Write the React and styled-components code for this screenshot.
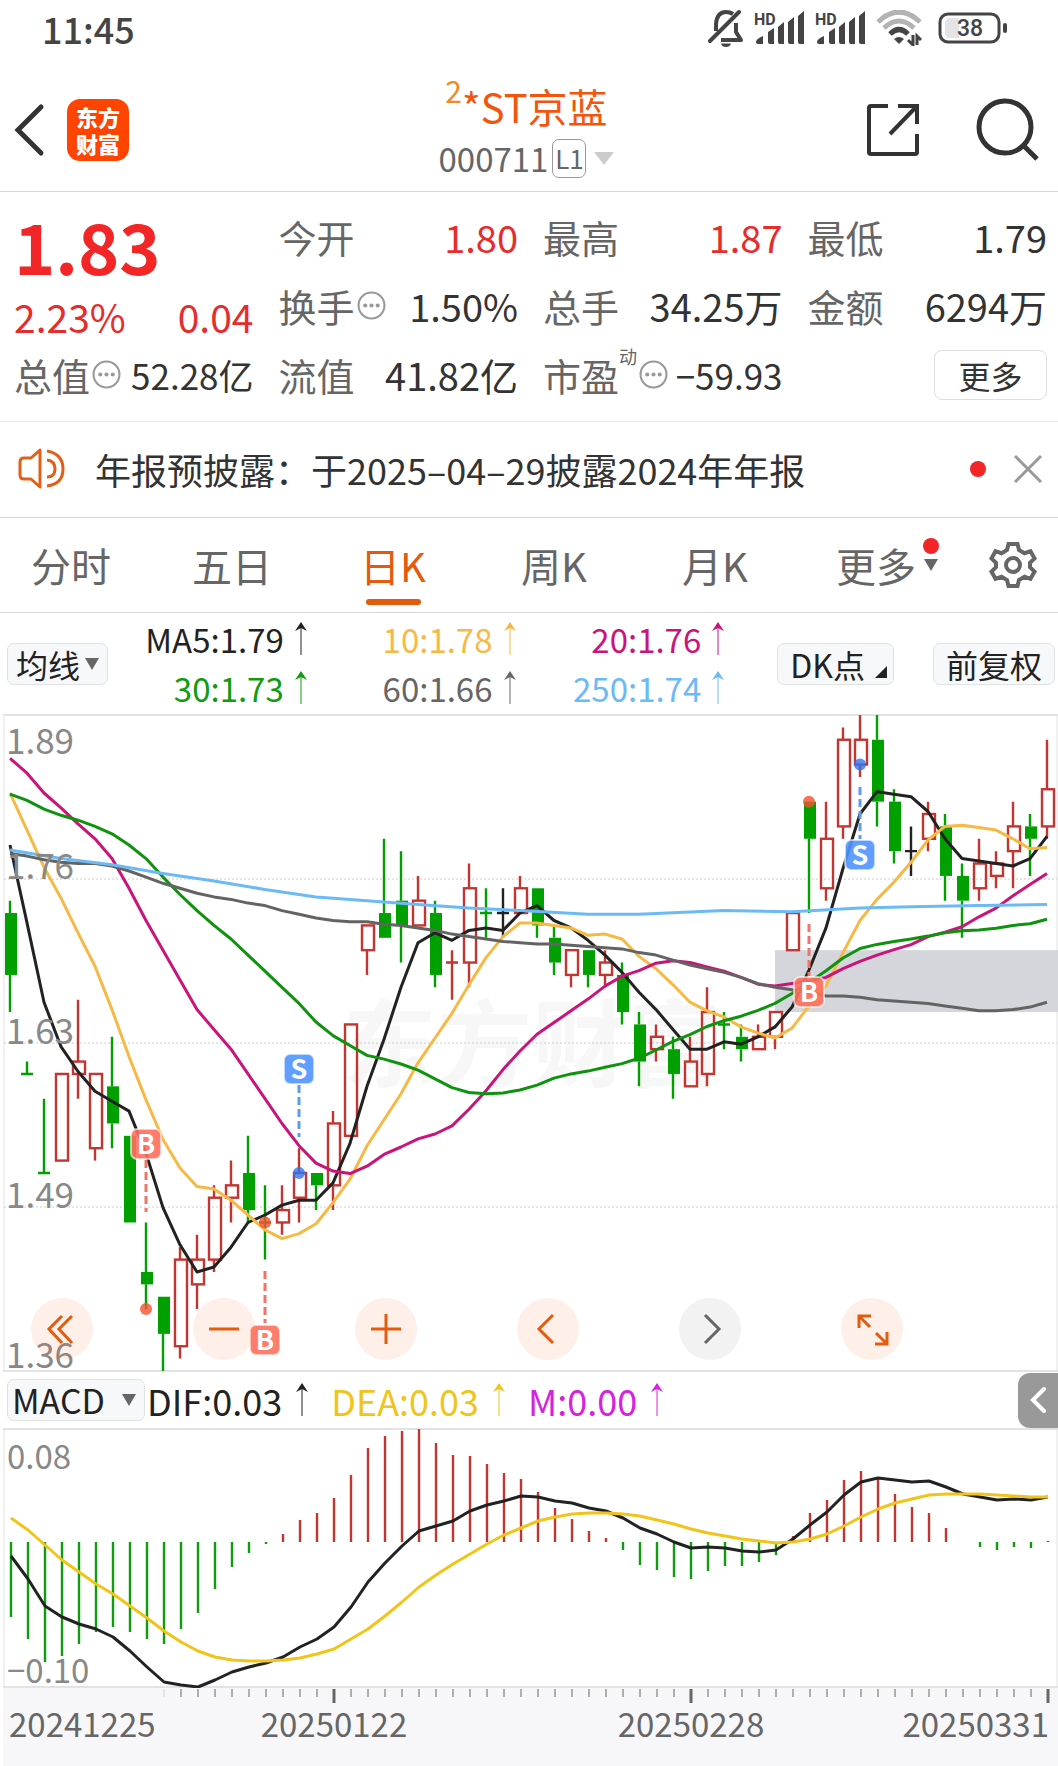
import React, { useState } from "react";
import styled, { createGlobalStyle } from "styled-components";

//Daily candles as [open, high, low, close], all in cents.
const candles = [
  [173, 174, 165, 168], [160, 161, 160, 160], [152, 158, 152, 152], [153, 160, 153, 160],
  [160, 166, 158, 161], [154, 160, 153, 160], [159, 163, 154, 156], [155, 155, 148, 148],
  [144, 148, 141, 143], [142, 142, 136, 139], [138, 146, 137, 145], [143, 147, 141, 145],
  [145, 151, 144, 150], [150, 153, 148, 151], [152, 155, 148, 149], [148, 151, 145, 148],
  [148, 151, 147, 149], [150, 154, 148, 152], [152, 152, 149, 151], [151, 157, 149, 156],
  [155, 164, 155, 164], [170, 172, 168, 172], [173, 179, 171, 171], [174, 178, 169, 172],
  [172, 176, 172, 174], [173, 174, 167, 168], [169, 170, 166, 169], [169, 177, 167, 175],
  [173, 175, 171, 173], [173, 175, 171, 173], [173, 176, 173, 175], [175, 175, 171, 172],
  [171, 172, 168, 169], [168, 170, 167, 170], [170, 170, 167, 168], [168, 170, 167, 169],
  [168, 169, 164, 165], [164, 165, 159, 161], [162, 164, 161, 163], [162, 163, 158, 160],
  [159, 163, 159, 161], [160, 167, 159, 165], [164, 165, 162, 164], [163, 164, 161, 162],
  [162, 164, 162, 163], [163, 165, 162, 165], [170, 173, 170, 173], [182, 182, 173, 179],
  [175, 182, 174, 179], [180, 188, 179, 187], [185, 189, 184, 187], [187, 189, 180, 182],
  [182, 183, 177, 178], [178, 180, 176, 178], [179, 182, 178, 181], [180, 181, 174, 176],
  [176, 177, 171, 174], [175, 179, 174, 177], [176, 178, 175, 177], [178, 182, 175, 180],
  [180, 181, 176, 179], [180, 187, 179, 183],
];

//Averages that reach back before the first candle start from these values.
const ma5Head = [178.5, 172.2, 165.8, 162.2];
const ma10Head = [182.7, 179.7, 176.7, 174.2, 171.4, 168.7, 165.2, 161.4, 157.9];
const ma20Head = [
  185.5, 184.3, 182.7, 181.5, 180.2, 179, 177.4, 175, 172.4, 170, 167.6, 165.2, 163.6, 162,
  160, 158, 156, 154.2, 152.8,
];
const ma30Head = [
  182.6, 182.1, 181.4, 180.9, 180.5, 180, 179.4, 178.5, 177.4, 175.9, 174.5, 173.2, 172,
  170.9, 169.6, 168.3, 167, 165.7, 164.2, 163.1, 162.3, 161.5, 161.2, 160.8, 160.3, 159.6,
  158.9, 158.5, 158.4,
];
const ma60 = [
  177.8, 177.6, 177.3, 177.1, 177, 177, 176.8, 176.4, 175.9, 175.4, 175, 174.6, 174.3, 174.1,
  173.8, 173.6, 173.2, 172.9, 172.6, 172.4, 172.3, 172.3, 172.1, 172, 171.8, 171.6, 171.3,
  171.1, 170.9, 170.7, 170.6, 170.5, 170.5, 170.4, 170.3, 170.2, 170.1, 169.8, 169.6, 169.2,
  168.8, 168.5, 168.2, 167.8, 167.3, 167, 166.8, 166.6, 166.3, 166.3, 166.2, 166, 165.9,
  165.8, 165.7, 165.5, 165.3, 165.1, 165.1, 165.2, 165.4, 165.8,
];
const ma250 = [
  [0, 178.1], [3, 177.4], [6, 176.9], [9, 176.2], [12, 175.6], [15, 174.9], [18, 174.3],
  [21, 174], [24, 173.7], [27, 173.4], [30, 173.2], [34, 172.9], [37, 172.9], [42, 173.2],
  [46, 173.1], [50, 173.4], [53, 173.5], [57, 173.6], [61, 173.7],
];

//MACD series, in chart units above or below the zero line.
const bars = [
  -75, -97, -120, -114, -102, -90, -85, -90, -97, -102, -87, -71, -47, -25, -11, -2, 8, 22, 29,
  44, 67, 94, 106, 111, 113, 99, 87, 86, 78, 69, 63, 50, 34, 23, 11, 4, -8, -23, -28, -35, -37,
  -29, -24, -24, -20, -13, 6, 29, 42, 62, 71, 64, 48, 35, 29, 14, 0, -5, -8, -5, -6, 1,
];
const dif = [
  -14, -37, -64, -75, -82, -87, -95, -109, -125, -140, -143, -145, -138, -130, -125, -121,
  -115, -105, -97, -85, -65, -40, -21, -4, 11, 16, 21, 31, 37, 41, 46, 45, 41, 39, 34, 31, 24,
  14, 8, 0, -6, -5, -6, -9, -10, -8, 3, 17, 30, 47, 60, 64, 62, 60, 61, 55, 48, 45, 42, 43, 42,
  45,
];
const dea = [
  24, 12, -3, -18, -30, -42, -52, -64, -76, -89, -100, -109, -115, -118, -119, -119, -118,
  -116, -112, -107, -97, -87, -74, -60, -45, -33, -22, -12, -2, 7, 14, 21, 25, 28, 29, 29, 28,
  26, 22, 18, 13, 9, 6, 3, 1, -1, 0, 3, 8, 16, 25, 33, 39, 43, 47, 48, 48, 48, 47, 46, 45, 45,
];

//Buy and sell points. dot is a price, from / to are where the dashed line runs, badge is the letter.
const marks = [
  { i: 8, type: "B", dot: 141, from: 446, to: 498, badge: 430 },
  { i: 15, type: "B", dot: 148, from: 557, to: 609, badge: 626 },
  { i: 17, type: "S", dot: 152, from: 371, to: 423, badge: 355 },
  { i: 47, type: "B", dot: 182, from: 210, to: 262, badge: 278 },
  { i: 50, type: "S", dot: 185, from: 73, to: 125, badge: 141 },
];

const RED = "#c23531";
const GREEN = "#00a000";
const TOP = 189;
const STEP = 656 / 53;

const candleX = (i) => 10 + i * 17;
const priceY = (p) => 1 + (TOP - p) * STEP;

const average = (head, days) =>
  candles.map((_, i) => {
    if (i < days - 1) return head[i];
    const part = candles.slice(i - days + 1, i + 1);
    return part.reduce((sum, c) => sum + c[3], 0) / days;
  });

const toPoints = (values) => values.map((v, i) => `${candleX(i)},${priceY(v).toFixed(1)}`).join(" ");
const macdPoints = (values) => values.map((v, i) => `${11 + i * 17},${114 - v}`).join(" ");

const Candle = ({ i, data }) => {
  const [open, high, low, close] = data;
  const x = candleX(i);
  const prev = i ? candles[i - 1][3] : open + 1;
  let color = close > open ? RED : GREEN;
  if (open === close) {
    color = close > prev ? RED : close < prev ? GREEN : "#222222";
    return (
      <g stroke={color} strokeWidth="2.4">
        <path d={`M${x} ${priceY(high)}V${priceY(low)}M${x - 6} ${priceY(close)}h12`} />
      </g>
    );
  }
  const top = priceY(Math.max(open, close));
  const bottom = priceY(Math.min(open, close));
  return (
    <g stroke={color} strokeWidth="2.4">
      <path d={`M${x} ${priceY(high)}V${top}M${x} ${bottom}V${priceY(low)}`} />
      {close > open ? (
        <rect x={x - 5} y={top} width="12" height={bottom - top} fill="none" />
      ) : (
        <rect x={x - 5} y={top} width="12" height={bottom - top} fill={color} stroke="none" />
      )}
    </g>
  );
};

const Mark = ({ mark }) => {
  const x = candleX(mark.i);
  const buy = mark.type === "B";
  const color = buy ? "#ff6f5c" : "#4f94ff";
  return (
    <g>
      <circle cx={x} cy={priceY(mark.dot)} r="6" fill={buy ? "#f8502f" : "#2f74f0"} opacity="0.8" />
      <path
        d={`M${x} ${mark.from}V${mark.to}`}
        stroke={buy ? "#ee7468" : "#5e9cea"}
        strokeWidth="3"
        strokeDasharray="8 4"
      />
      <rect
        x={x - 15}
        y={mark.badge - 15}
        width="30"
        height="30"
        rx="6"
        fill={color}
        stroke="#ffffff"
        strokeOpacity="0.6"
        strokeWidth="2"
        fillOpacity="0.9"
      />
      <BadgeText x={x} y={mark.badge + 10}>
        {mark.type}
      </BadgeText>
    </g>
  );
};

const PriceChart = () => (
  <Chart viewBox="0 0 1058 658" role="img" aria-label="日K线">
    <Watermark x="342" y="366">东方财富</Watermark>
    <path d="M3 1H1058M3 657H1058" stroke="#e3e3e3" strokeWidth="2" />
    <path d="M4 1V657M1057 1V657" stroke="#e3e3e3" />
    <path d="M4 165H1057M4 329H1057M4 493H1057" stroke="#cccccc" strokeDasharray="2 2" />
    <rect x="775" y={priceY(170)} width="283" height={5 * STEP} fill="#d4d6db" />
    {candles.map((c, i) => (
      <Candle key={i} i={i} data={c} />
    ))}
    <Line points={toPoints(average(ma5Head, 5))} stroke="#222222" />
    <Line points={toPoints(average(ma10Head, 10))} stroke="#f7b945" />
    <Line points={toPoints(average(ma20Head, 20))} stroke="#c9147c" />
    <Line points={toPoints(average(ma30Head, 30))} stroke="#0f930f" />
    <Line points={toPoints(ma60)} stroke="#636363" />
    <Line
      points={ma250.map(([i, v]) => `${candleX(i)},${priceY(v).toFixed(1)}`).join(" ")}
      stroke="#6cbaf5"
    />
    {marks.map((m) => (
      <Mark key={m.i} mark={m} />
    ))}
    <Scale x="6" y="40">1.89</Scale>
    <Scale x="6" y="165">1.76</Scale>
    <Scale x="6" y="330">1.63</Scale>
    <Scale x="6" y="494">1.49</Scale>
    <Scale x="6" y="654">1.36</Scale>
  </Chart>
);

const MacdChart = () => (
  <Chart viewBox="0 0 1058 260" role="img" aria-label="MACD">
    <path d="M3 1H1058M3 259H1058" stroke="#e3e3e3" strokeWidth="2" />
    <path d="M4 1V259M1057 1V259" stroke="#e3e3e3" />
    {bars.map((v, i) => (
      <path
        key={i}
        d={`M${11 + i * 17} 114v${-v}`}
        stroke={v > 0 ? RED : "#0f9c0f"}
        strokeWidth="2.4"
      />
    ))}
    <Line points={macdPoints(dif)} stroke="#222222" />
    <Line points={macdPoints(dea)} stroke="#f0c419" />
    <Scale $small x="7" y="41">0.08</Scale>
    <Scale $small x="7" y="255">−0.10</Scale>
  </Chart>
);

const DateAxis = () => (
  <Chart viewBox="0 0 1058 78" role="img" aria-label="日期">
    <rect x="3" width="1055" height="78" fill="#f7f7f9" />
    {bars.map((_, i) => {
      if (i < 9) return null;
      const major = i === 19 || i === 40 || i === 61;
      return (
        <path
          key={i}
          d={`M${11 + i * 17} 1v${major ? 14 : 8}`}
          stroke={i === 9 ? "#d0d0d0" : "#666666"}
          strokeWidth={major ? 3 : 1}
        />
      );
    })}
    <DateText x="9" y="49">20241225</DateText>
    <DateText x="334" y="49" textAnchor="middle">20250122</DateText>
    <DateText x="691" y="49" textAnchor="middle">20250228</DateText>
    <DateText x="1049" y="49" textAnchor="end">20250331</DateText>
  </Chart>
);

const UpArrow = () => (
  <svg width="14" height="34" viewBox="0 0 14 34" aria-hidden="true">
    <path d="M7 1V33" stroke="currentColor" strokeWidth="1" fill="none" />
    <path d="M7 0l6 9-6-3-6 3z" fill="currentColor" />
  </svg>
);

const Caret = ({ color = "#666666", width = 14, height = 12 }) => (
  <svg width={width} height={height} viewBox="0 0 14 12" preserveAspectRatio="none" aria-hidden="true">
    <path d="M0 0H14L7 12z" fill={color} />
  </svg>
);

const Signal = () => (
  <svg width="51" height="36" viewBox="0 0 51 36" aria-hidden="true">
    <HdText x="0" y="15">HD</HdText>
    <path
      d="M2 32q0-3 7-6v8H4q-2 0-2-2zM14 22l6-4v16h-4q-2 0-2-2zM24 17l6-5v22h-4q-2 0-2-2zM34 12l6-5v27h-4q-2 0-2-2zM44 6l6-5v33h-4q-2 0-2-2z"
      fill="#444444"
    />
  </svg>
);

const StatusIcons = () => (
  <Status>
    <svg width="36" height="38" viewBox="0 0 36 38" fill="none" stroke="#444444" strokeWidth="4">
      <path d="M31 3L2 32" strokeLinecap="round" />
      <path d="M8 22V15Q9 3 18 3q4 0 7 2M28 14v9l5 8H13" strokeLinejoin="round" />
      <path d="M13 34.500h10q-1 3.500-5 3.500t-5-3.500z" fill="#444444" stroke="none" />
    </svg>
    <Signal />
    <Signal />
    <svg width="52" height="36" viewBox="0 0 52 36" fill="none">
      <path d="M2 12Q23-8 44 12" stroke="#b3b3b3" strokeWidth="5" />
      <path d="M8 18Q23 4 38 18" stroke="#b3b3b3" strokeWidth="5" />
      <path d="M14 24Q23 15 32 24" stroke="#444444" strokeWidth="5" />
      <path d="M18 29q5-4 10 0l-5 5z" fill="#444444" />
      <path d="M37 25v10l-5-5M41 35V26l4 4" stroke="#444444" strokeWidth="3" />
    </svg>
    <svg width="70" height="32" viewBox="0 0 70 32">
      <rect x="2" y="2" width="59" height="28" rx="8" fill="#ffffff" stroke="#444444" strokeWidth="3" />
      <path d="M12 6h9v20h-9q-5 0-5-5V11q0-5 5-5z" fill="#e4e4e4" />
      <rect x="65" y="11" width="4" height="10" rx="2" fill="#444444" />
      <BatteryText x="32" y="24">38</BatteryText>
    </svg>
  </Status>
);

const Dots = () => (
  <DotsIcon width="29" height="29" viewBox="0 0 28 28" aria-hidden="true">
    <circle cx="14" cy="14" r="12.500" fill="none" stroke="#999999" strokeWidth="2" />
    <g fill="#999999">
      <circle cx="8" cy="14" r="2" />
      <circle cx="14" cy="14" r="2" />
      <circle cx="20" cy="14" r="2" />
    </g>
  </DotsIcon>
);

const quotes = [
  { label: "今开", value: "1.80", red: true },
  { label: "最高", value: "1.87", red: true },
  { label: "最低", value: "1.79" },
  { label: "换手", value: "1.50%", info: true },
  { label: "总手", value: "34.25万" },
  { label: "金额", value: "6294万" },
  { label: "总值", value: "52.28亿", info: true, small: true },
  { label: "流值", value: "41.82亿" },
  { label: "市盈", value: "−59.93", info: true, small: true, sup: "动" },
];

const averages = [
  { text: "MA5:1.79", color: "#222222" },
  { text: "10:1.78", color: "#f7b945" },
  { text: "20:1.76", color: "#c9147c" },
  { text: "30:1.73", color: "#0f9c0f" },
  { text: "60:1.66", color: "#666666" },
  { text: "250:1.74", color: "#6cbaf5" },
];

const tabs = ["分时", "五日", "日K", "周K", "月K", "更多"];

const controls = [
  { name: "最早", d: "M31 18L18 31l13 14M41 18L28 31l13 14" },
  { name: "缩小", d: "M16 31h30" },
  { name: "放大", d: "M16 31h30M31 16v30" },
  { name: "向左", d: "M36 17L22 31l14 14" },
  { name: "向右", d: "M26 17l14 14-14 14", muted: true },
  { name: "全屏", d: "M30 18H18v12M18 18l11 11M34 46h12V34M46 46L35 35" },
];

const App = () => {
  const [tab, setTab] = useState("日K");

  return (
    <Page>
      <GlobalStyle />
      <StatusBar>
        <Clock>11:45</Clock>
        <StatusIcons />
      </StatusBar>

      <Header>
        <HeaderSide>
          <IconButton aria-label="返回">
            <svg width="32" height="54" viewBox="0 0 32 54" fill="none" stroke="#333333" strokeWidth="5">
              <path d="M28 4L5 27l23 23" strokeLinecap="round" />
            </svg>
          </IconButton>
          <Logo href="#">
            东方
            <br />
            财富
          </Logo>
        </HeaderSide>
        <Stock>
          <StockName>
            <Rank>2</Rank>*ST京蓝
          </StockName>
          <StockCode>
            000711<Level>L1</Level>
            <Caret color="#cccccc" width={20} height={13} />
          </StockCode>
        </Stock>
        <HeaderSide $end>
          <IconButton aria-label="分享">
            <svg width="54" height="54" viewBox="0 0 54 54" fill="none" stroke="#333333" strokeWidth="4">
              <path d="M22 3H5Q3 3 3 5v44q0 2 2 2h44q2 0 2-2V31" />
              <path d="M32 3h19v18M51 3L24 31" />
            </svg>
          </IconButton>
          <IconButton aria-label="搜索">
            <svg width="64" height="64" viewBox="0 0 64 64" fill="none" stroke="#333333" strokeWidth="5">
              <circle cx="29" cy="29" r="26" />
              <path d="M47 47l14 14" />
            </svg>
          </IconButton>
        </HeaderSide>
      </Header>

      <Quote>
        <Price>
          <Last>1.83</Last>
          <Change>
            <span>2.23%</span>
            <span>0.04</span>
          </Change>
        </Price>
        {quotes.map((q) => (
          <Item key={q.label}>
            <Label>{q.label}</Label>
            {q.sup && <Sup>{q.sup}</Sup>}
            {q.info && <Dots />}
            <Value $red={q.red} $small={q.small}>
              {q.value}
            </Value>
          </Item>
        ))}
        <MoreButton>更多</MoreButton>
      </Quote>

      <Notice>
        <svg width="48" height="42" viewBox="0 0 48 42" fill="none" stroke="#e06019" strokeWidth="3">
          <path d="M22 2v37l-9-8H6q-4 0-4-4V14q0-4 4-4h7z" strokeLinejoin="round" />
          <path d="M29 12q8 1 8 9t-8 8M29 3q16 3 16 18T29 38" />
        </svg>
        <NoticeText href="#">年报预披露：于2025–04–29披露2024年年报</NoticeText>
        <RedDot />
        <IconButton aria-label="关闭">
          <svg width="28" height="28" viewBox="0 0 28 28" stroke="#999999" strokeWidth="3">
            <path d="M1 1l26 26M27 1L1 27" />
          </svg>
        </IconButton>
      </Notice>

      <TabBar>
        <Tabs>
          {tabs.map((t) => (
            <Tab key={t} $active={t === tab} onClick={() => setTab(t)}>
              {t}
              {t === "更多" && (
                <TabBadge>
                  <RedDot />
                  <Caret />
                </TabBadge>
              )}
            </Tab>
          ))}
        </Tabs>
        <IconButton aria-label="设置">
          <svg width="48" height="48" viewBox="0 0 48 48" fill="none" stroke="#666666" strokeWidth="4">
            <path d="M19.500 3h9l1.500 6 5.500 3.200 6-2 4 7.200-4.500 4.400v4.400l4.500 4.400-4 7.200-6-2-5.500 3.200-1.500 6h-9l-1.500-6-5.500-3.200-6 2-4-7.200L7 26.200v-4.400l-4.500-4.400 4-7.200 6 2L18 9z" />
            <circle cx="24" cy="24" r="7" />
          </svg>
        </IconButton>
      </TabBar>

      <AverageBar>
        <Chip>
          均线
          <Caret />
        </Chip>
        <Averages>
          {averages.map((a) => (
            <Reading key={a.text} $color={a.color}>
              {a.text}
              <UpArrow />
            </Reading>
          ))}
        </Averages>
        <ChipGroup>
          <Chip $wide>
            DK点
            <Corner width="12" height="12" viewBox="0 0 12 12">
              <path d="M12 0V12H0z" fill="#222222" />
            </Corner>
          </Chip>
          <Chip $wide>前复权</Chip>
        </ChipGroup>
      </AverageBar>

      <ChartArea>
        <PriceChart />
        <Controls>
          {controls.map((c) => (
            <RoundButton key={c.name} aria-label={c.name} $muted={c.muted}>
              <svg width="62" height="62" viewBox="0 0 62 62" fill="none" stroke="currentColor" strokeWidth="3">
                <path d={c.d} />
              </svg>
            </RoundButton>
          ))}
        </Controls>
      </ChartArea>

      <MacdBar>
        <Chip $macd>
          MACD
          <Caret />
        </Chip>
        <Reading $large $color="#222222">
          DIF:0.03
          <UpArrow />
        </Reading>
        <Reading $large $color="#f0c419">
          DEA:0.03
          <UpArrow />
        </Reading>
        <Reading $large $color="#d622dc">
          M:0.00
          <UpArrow />
        </Reading>
        <Drawer aria-label="展开">
          <svg width="16" height="28" viewBox="0 0 16 28" fill="none" stroke="#ffffff" strokeWidth="4">
            <path d="M14 3L3 14l11 11" strokeLinecap="round" />
          </svg>
        </Drawer>
      </MacdBar>
      <MacdChart />
      <DateAxis />
    </Page>
  );
};

const GlobalStyle = createGlobalStyle`
  * {
    box-sizing: border-box;
  }
  body {
    margin: 0;
    background: #ffffff;
    font-family: "Noto Sans CJK SC", "Noto Sans", sans-serif;
    color: #333333;
  }
  button {
    font-family: inherit;
    padding: 0;
    border: none;
    background: none;
    color: inherit;
    cursor: pointer;
  }
  a {
    color: inherit;
    text-decoration: none;
  }
  svg {
    flex-shrink: 0;
    display: block;
  }
`;

const Page = styled.main`
  width: 100%;
  background: #ffffff;
`;

const StatusBar = styled.div`
  display: flex;
  justify-content: space-between;
  align-items: center;
  height: 55px;
  padding: 0 50px 0 42px;
`;

const Clock = styled.time`
  font-size: 36px;
  font-weight: 500;
  color: #444444;
`;

const Status = styled.div`
  display: flex;
  align-items: center;
  gap: 10px;
`;

const HdText = styled.text`
  font-family: Roboto, sans-serif;
  font-size: 16px;
  font-weight: 700;
  fill: #444444;
`;

const BatteryText = styled.text`
  font-family: Roboto, sans-serif;
  font-size: 23px;
  font-weight: 500;
  text-anchor: middle;
  fill: #444444;
`;

const Header = styled.header`
  display: grid;
  grid-template-columns: 1fr auto 1fr;
  align-items: center;
  height: 137px;
  padding: 14px 18px 0 13px;
  border-bottom: 1px solid #d8d8d8;
`;

const HeaderSide = styled.div`
  display: flex;
  align-items: center;
  justify-content: ${(props) => (props.$end ? "flex-end" : "flex-start")};
  gap: ${(props) => (props.$end ? "56px" : "22px")};
`;

const IconButton = styled.button`
  display: block;
`;

const Logo = styled.a`
  width: 62px;
  height: 62px;
  padding-top: 4px;
  border-radius: 13px;
  background: #ff4400;
  color: #ffffff;
  font-size: 22px;
  font-weight: 900;
  line-height: 27px;
  text-align: center;
`;

const Stock = styled.div`
  display: flex;
  flex-direction: column;
  align-items: center;
`;

const StockName = styled.h1`
  display: flex;
  margin: 0;
  font-size: 40px;
  font-weight: 400;
  line-height: 56px;
  color: #f2560d;
`;

const Rank = styled.span`
  font-size: 30px;
  line-height: 24px;
  color: #f08a24;
`;

const StockCode = styled.div`
  display: flex;
  align-items: center;
  gap: 8px;
  font-size: 33px;
  line-height: 48px;
  color: #666666;
`;

const Level = styled.span`
  width: 34px;
  height: 39px;
  margin-left: -4px;
  border: 1px solid #999999;
  border-radius: 7px;
  font-size: 26px;
  line-height: 36px;
  text-align: center;
`;

const Quote = styled.section`
  display: grid;
  grid-template-columns: repeat(4, 1fr);
  grid-auto-rows: 69px;
  column-gap: 25px;
  padding: 10px 11px 12px 14px;
  border-bottom: 1px solid #ebebeb;
`;

const Price = styled.div`
  grid-row: span 2;
  color: #f22626;
`;

const Last = styled.div`
  font-size: 70px;
  font-weight: 700;
  line-height: 86px;
`;

const Change = styled.div`
  display: flex;
  justify-content: space-between;
  padding-top: 4px;
  font-size: 39px;
  line-height: 48px;
  color: #e62d2d;
`;

const Item = styled.div`
  display: flex;
  align-items: center;
  white-space: nowrap;
`;

const Label = styled.span`
  font-size: 38px;
  line-height: 48px;
  color: #666666;
`;

const Sup = styled.sup`
  align-self: flex-start;
  font-size: 18px;
  line-height: 32px;
  color: #666666;
`;

const DotsIcon = styled.svg`
  margin-left: 2px;
`;

const Value = styled.span`
  margin-left: auto;
  font-size: ${(props) => (props.$small ? "35px" : "38px")};
  line-height: 48px;
  color: ${(props) => (props.$red ? "#e62d2d" : "#333333")};
`;

const MoreButton = styled.button`
  align-self: center;
  justify-self: end;
  width: 113px;
  height: 50px;
  border: 1px solid #dedede;
  border-radius: 8px;
  font-size: 32px;
  line-height: 46px;
`;

const Notice = styled.section`
  display: flex;
  align-items: center;
  height: 96px;
  padding: 0 16px 2px 18px;
  border-bottom: 1px solid #d8d8d8;
`;

const NoticeText = styled.a`
  flex: 1;
  padding-left: 29px;
  font-size: 36px;
  line-height: 48px;
`;

const RedDot = styled.span`
  width: 16px;
  height: 16px;
  margin-right: 28px;
  border-radius: 50%;
  background: #f22626;
`;

const TabBar = styled.nav`
  display: flex;
  align-items: center;
  height: 95px;
  padding: 0 21px 0 31px;
  border-bottom: 1px solid #d8d8d8;
`;

const Tabs = styled.div`
  display: flex;
  flex: 1;
  justify-content: space-between;
  height: 94px;
  padding-right: 73px;
`;

const Tab = styled.button`
  position: relative;
  display: flex;
  flex-direction: column;
  align-items: center;
  width: 80px;
  padding-top: 17px;
  font-size: 40px;
  line-height: 60px;
  white-space: nowrap;
  color: ${(props) => (props.$active ? "#e35b0c" : "#666666")};

  &::after {
    content: "";
    width: 55px;
    height: 6px;
    margin-top: 4px;
    border-radius: 3px;
    background: ${(props) => (props.$active ? "#e35b0c" : "transparent")};
  }
`;

const TabBadge = styled.span`
  position: absolute;
  top: 20px;
  left: 87px;
  display: flex;
  flex-direction: column;
  align-items: center;
  gap: 5px;

  ${RedDot} {
    margin: 0;
  }
`;

const AverageBar = styled.section`
  display: flex;
  align-items: center;
  height: 101px;
  padding: 0 3px 0 7px;
`;

const Chip = styled.button`
  position: relative;
  display: flex;
  align-items: center;
  gap: ${(props) => (props.$macd ? "17px" : "5px")};
  height: 42px;
  padding: 0 ${(props) => (props.$wide ? "12px" : "8px")};
  padding-left: ${(props) => (props.$macd ? "4px" : props.$wide ? "12px" : "8px")};
  border: 1px solid #dfe2e5;
  border-radius: 7px;
  background: #f7f8fa;
  font-size: ${(props) => (props.$macd ? "34px" : "32px")};
  line-height: 40px;
  white-space: nowrap;
  color: #222222;
`;

const ChipGroup = styled.div`
  display: flex;
  gap: 39px;
  padding-left: 52px;

  ${Chip}:first-child {
    padding-right: 28px;
  }
`;

const Corner = styled.svg`
  position: absolute;
  right: 6px;
  bottom: 6px;
`;

const Averages = styled.div`
  display: grid;
  grid-template-columns: 200fr 209fr 209fr;
  flex: 1;
`;

const Reading = styled.div`
  display: flex;
  align-items: center;
  justify-content: flex-end;
  gap: ${(props) => (props.$large ? "13px" : "10px")};
  font-size: ${(props) => (props.$large ? "36px" : "33px")};
  line-height: 49px;
  color: ${(props) => props.$color};
`;

const ChartArea = styled.section`
  position: relative;
`;

const Chart = styled.svg`
  width: 100%;
  height: auto;
  overflow: visible;
`;

const Line = styled.polyline`
  fill: none;
  stroke-width: 3;
  stroke-linejoin: round;
`;

const Scale = styled.text`
  font-size: ${(props) => (props.$small ? "33px" : "35px")};
  fill: #888888;
`;

const DateText = styled.text`
  font-size: 33px;
  fill: #666666;
`;

const BadgeText = styled.text`
  font-size: 27px;
  font-weight: 700;
  text-anchor: middle;
  fill: #ffffff;
`;

const Watermark = styled.text`
  font-size: 95px;
  font-weight: 700;
  fill: #f7f7f7;
`;

const Controls = styled.div`
  position: absolute;
  left: 31px;
  bottom: 12px;
  display: flex;
  gap: 100px;
`;

const RoundButton = styled.button`
  width: 62px;
  height: 62px;
  border-radius: 50%;
  color: ${(props) => (props.$muted ? "#666666" : "#e35b0c")};
  background: ${(props) => (props.$muted ? "rgba(0, 0, 0, 0.05)" : "rgba(250, 110, 40, 0.1)")};
`;

const MacdBar = styled.section`
  display: flex;
  align-items: center;
  gap: 22px;
  height: 56px;
  padding-left: 7px;

  ${Chip} {
    margin-right: -20px;
  }
`;

const Drawer = styled.button`
  display: flex;
  align-items: center;
  justify-content: center;
  width: 40px;
  height: 55px;
  margin-left: auto;
  border-radius: 12px 0 0 12px;
  background: #999999;
`;

export default App;
